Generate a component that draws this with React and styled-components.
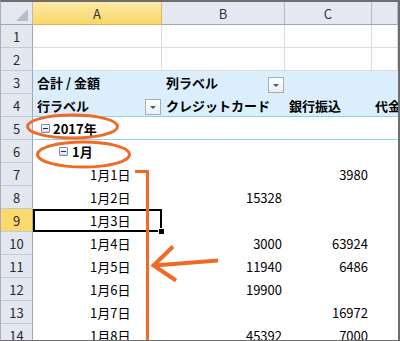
import React from "react";
import styled, { createGlobalStyle, css } from "styled-components";

const GlobalStyle = createGlobalStyle`
  html, body {
    margin: 0;
    padding: 0;
    background: #fff;
  }
  body {
    font-family: "Noto Sans CJK JP", "DejaVu Sans", sans-serif;
    font-size: 13px;
    color: #000;
  }
`;

const ORANGE = "#ef6a25";
const GRID = "#dadada";
const PIVOT_LINE = "#8ccff0";

const Frame = styled.div`
  position: relative;
  width: 400px;
  height: 341px;
  box-sizing: border-box;
  border-top: 2px solid #6e6e6e;
  border-left: 1px solid #a9adb5;
  border-right: 2px solid #6e6e6e;
  border-bottom: 1px solid #6e6e6e;
  overflow: hidden;
`;

const Sheet = styled.div`
  display: grid;
  grid-template-columns: 32px 129px 123px 87px 26px;
  grid-auto-rows: 23px;
`;

const ColHead = styled.div`
  display: flex;
  align-items: center;
  justify-content: center;
  box-sizing: border-box;
  border-right: 1px solid #b4b9c4;
  border-bottom: 1px solid #9ea7b6;
  background: #e5e8f1;
  color: #333;
  font-size: 13px;

  ${(p) =>
    p.$active &&
    css`
      background: linear-gradient(#fdeaa6, #f9d66a);
      border-bottom-color: #eab04c;
      border-right-color: #e2b65c;
    `}
`;

const Corner = styled(ColHead)`
  align-items: flex-end;
  justify-content: flex-end;
  padding: 0 4px 3px 0;

  &::after {
    content: "";
    width: 0;
    height: 0;
    border-left: 12px solid transparent;
    border-bottom: 12px solid #b8bcc6;
  }
`;

const RowHead = styled.div`
  display: flex;
  align-items: center;
  justify-content: center;
  box-sizing: border-box;
  border-right: 1px solid #9ea7b6;
  border-bottom: 1px solid #c4c9d3;
  background: ${(p) => (p.$active ? "#fbd96c" : "#e3e7f0")};
  color: #2b2b2b;
  font-size: 13px;
`;

const Cell = styled.div`
  position: relative;
  display: flex;
  align-items: center;
  box-sizing: border-box;
  white-space: nowrap;
  font-weight: ${(p) => (p.$bold ? 700 : 400)};
  padding-left: ${(p) => p.$indent || 0}px;
  padding-right: ${(p) => p.$padRight || 0}px;
  justify-content: ${(p) => (p.$right ? "flex-end" : "flex-start")};

  ${(p) =>
    p.$kind === "grid" &&
    css`
      border-right: 1px solid ${GRID};
      border-bottom: 1px solid ${GRID};
    `}

  ${(p) =>
    p.$kind === "head" &&
    css`
      background: #daeefb;
    `}

  ${(p) =>
    p.$line &&
    css`
      border-bottom: 1px solid ${PIVOT_LINE};
    `}

  ${(p) =>
    p.$selected &&
    css`
      z-index: 1;
      box-shadow: inset 0 0 0 2px #000;
    `}
`;

const HeadCell = styled(Cell)`
  justify-content: space-between;
  align-items: center;
`;

const HeadLabel = styled.span`
  font-weight: 700;
`;

const DropButton = styled.span`
  align-self: flex-end;
  margin: 0 1px 1px 0;
  width: 16px;
  height: 16px;
  box-sizing: border-box;
  border: 1px solid #a9acb2;
  background: linear-gradient(#ffffff, #eceef1);
  display: flex;
  align-items: center;
  justify-content: center;

  &::after {
    content: "";
    border-left: 3px solid transparent;
    border-right: 3px solid transparent;
    border-top: 3px solid #555;
  }
`;

const Toggle = styled.span`
  width: 9px;
  height: 9px;
  box-sizing: border-box;
  margin-right: ${(p) => p.$gap}px;
  border: 1px solid #7d8aa6;
  border-radius: 1px;
  background: linear-gradient(#ffffff, #d9dfea);
  display: flex;
  align-items: center;
  justify-content: center;

  &::after {
    content: "";
    width: 5px;
    height: 1px;
    background: #1d2a4a;
  }
`;

const FillHandle = styled.span`
  position: absolute;
  right: -3px;
  bottom: -3px;
  width: 5px;
  height: 5px;
  background: #000;
  border: 1px solid #fff;
`;

const Overlay = styled.svg`
  position: absolute;
  left: -1px;
  top: -2px;
  width: 400px;
  height: 341px;
  pointer-events: none;
  z-index: 2;
`;

const dayRows = [
  { n: 7, label: "1月1日", c: "3980" },
  { n: 8, label: "1月2日", b: "15328" },
  { n: 9, label: "1月3日", selected: true },
  { n: 10, label: "1月4日", b: "3000", c: "63924" },
  { n: 11, label: "1月5日", b: "11940", c: "6486" },
  { n: 12, label: "1月6日", b: "19900" },
  { n: 13, label: "1月7日", c: "16972" },
  { n: 14, label: "1月8日", b: "45392", c: "7000" },
];

function GridRow({ n }) {
  return (
    <>
      <RowHead>{n}</RowHead>
      <Cell $kind="grid" />
      <Cell $kind="grid" />
      <Cell $kind="grid" />
      <Cell $kind="grid" />
    </>
  );
}

export default function App() {
  return (
    <>
      <GlobalStyle />
      <Frame>
        <Sheet>
          <Corner />
          <ColHead $active>A</ColHead>
          <ColHead>B</ColHead>
          <ColHead>C</ColHead>
          <ColHead />

          <GridRow n={1} />
          <GridRow n={2} />

          <RowHead>3</RowHead>
          <HeadCell $kind="head" $indent={4}>
            <HeadLabel>合計 / 金額</HeadLabel>
          </HeadCell>
          <HeadCell $kind="head" $indent={4}>
            <HeadLabel>列ラベル</HeadLabel>
            <DropButton />
          </HeadCell>
          <Cell $kind="head" />
          <Cell $kind="head" />

          <RowHead>4</RowHead>
          <HeadCell $kind="head" $indent={4} $line>
            <HeadLabel>行ラベル</HeadLabel>
            <DropButton />
          </HeadCell>
          <HeadCell $kind="head" $indent={4} $line>
            <HeadLabel>クレジットカード</HeadLabel>
          </HeadCell>
          <HeadCell $kind="head" $indent={4} $line>
            <HeadLabel>銀行振込</HeadLabel>
          </HeadCell>
          <HeadCell $kind="head" $indent={3} $line>
            <HeadLabel>代金</HeadLabel>
          </HeadCell>

          <RowHead>5</RowHead>
          <Cell $indent={8} $bold $line>
            <Toggle $gap={3} />
            2017年
          </Cell>
          <Cell $line />
          <Cell $line />
          <Cell $line />

          <RowHead>6</RowHead>
          <Cell $indent={26} $bold>
            <Toggle $gap={4} />
            1月
          </Cell>
          <Cell />
          <Cell />
          <Cell />

          {dayRows.map((r) => (
            <React.Fragment key={r.n}>
              <RowHead $active={r.selected}>{r.n}</RowHead>
              <Cell $indent={57} $selected={r.selected}>
                {r.label}
                {r.selected && <FillHandle />}
              </Cell>
              <Cell $right $padRight={3}>{r.b}</Cell>
              <Cell $right $padRight={4}>{r.c}</Cell>
              <Cell />
            </React.Fragment>
          ))}
        </Sheet>

        <Overlay viewBox="0 0 400 341">
          <g fill="none" stroke={ORANGE}>
            <ellipse cx="72.5" cy="126.5" rx="45" ry="11.5" strokeWidth="3" />
            <ellipse cx="83.5" cy="154.5" rx="46" ry="12.5" strokeWidth="3" />
            <path d="M135 171.5 H147.5 V341" strokeWidth="3" />
            <path d="M218 260.5 L154 265.5" strokeWidth="4" />
            <path
              d="M173 246.5 L153.5 265.5 L176 280.5"
              strokeWidth="4"
              strokeLinejoin="miter"
            />
          </g>
        </Overlay>
      </Frame>
    </>
  );
}
